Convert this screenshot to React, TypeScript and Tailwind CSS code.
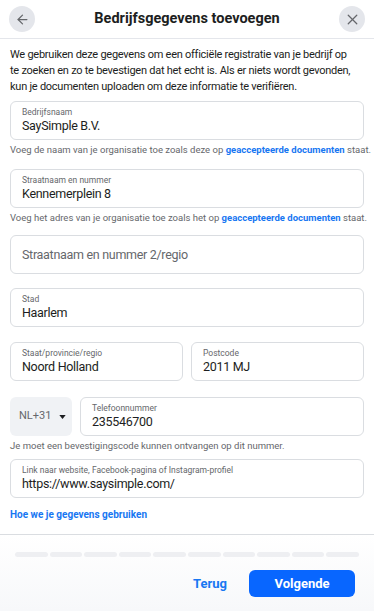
import { ArrowLeft, X } from "lucide-react";

const font = { fontFamily: 'Roboto, "Liberation Sans", Arial, sans-serif' };

function Field({ label, value, placeholder }: { label?: string; value?: string; placeholder?: string }) {
  return (
    <div className="h-[39px] rounded-[6px] border border-[#dadde1] bg-white px-[11px] flex flex-col justify-center">
      {label ? (
        <>
          <div className="text-[8.5px] leading-[11px] text-[#65676b] whitespace-nowrap">{label}</div>
          <div className="text-[12.5px] leading-[16px] tracking-[-0.3px] text-[#1c1e21]">{value}</div>
        </>
      ) : (
        <div className="text-[12.5px] leading-[16px] tracking-[-0.3px] text-[#65676b]">{placeholder}</div>
      )}
    </div>
  );
}

function Helper({ children }: { children: React.ReactNode }) {
  return <div className="h-[12px] text-[9.5px] leading-[12px] text-[#65676b] mt-[4px] whitespace-nowrap">{children}</div>;
}

export default function App() {
  return (
    <div className="w-[374px] h-[611px] bg-white flex flex-col overflow-hidden" style={font}>
      <div className="h-[39px] flex items-center justify-between px-[9px] border-b border-[#e4e6eb] shrink-0">
        <button className="w-[26px] h-[26px] rounded-full bg-[#e4e6eb] flex items-center justify-center">
          <ArrowLeft className="w-[15px] h-[15px] text-[#65676b]" strokeWidth={2} />
        </button>
        <div className="text-[14.5px] font-bold text-[#1c1e21]">Bedrijfsgegevens toevoegen</div>
        <button className="w-[26px] h-[26px] rounded-full bg-[#e4e6eb] flex items-center justify-center">
          <X className="w-[17px] h-[17px] text-[#65676b]" strokeWidth={1.75} />
        </button>
      </div>

      <div className="px-[10px] flex-1 min-h-0">
        <p className="text-[11px] leading-[16px] tracking-[-0.25px] text-[#1c1e21] mt-[8px] whitespace-nowrap">
          We gebruiken deze gegevens om een officiële registratie van je bedrijf op
          <br />
          te zoeken en zo te bevestigen dat het echt is. Als er niets wordt gevonden,
          <br />
          kun je documenten uploaden om deze informatie te verifiëren.
        </p>

        <div className="mt-[6px]">
          <Field label="Bedrijfsnaam" value="SaySimple B.V." />
          <Helper>
            Voeg de naam van je organisatie toe zoals deze op{" "}
            <span className="text-[#1877f2] font-bold">geaccepteerde documenten</span> staat.
          </Helper>
        </div>

        <div className="mt-[13px]">
          <Field label="Straatnaam en nummer" value="Kennemerplein 8" />
          <Helper>
            Voeg het adres van je organisatie toe zoals het op{" "}
            <span className="text-[#1877f2] font-bold">geaccepteerde documenten</span> staat.
          </Helper>
        </div>

        <div className="mt-[11px]">
          <Field placeholder="Straatnaam en nummer 2/regio" />
        </div>

        <div className="mt-[14px]">
          <Field label="Stad" value="Haarlem" />
        </div>

        <div className="mt-[15px] grid grid-cols-2 gap-[8px]">
          <Field label="Staat/provincie/regio" value="Noord Holland" />
          <Field label="Postcode" value="2011 MJ" />
        </div>

        <div className="mt-[16px] flex gap-[8px]">
          <div className="w-[62px] h-[39px] rounded-[6px] bg-[#f0f2f5] flex items-center pl-[9px] gap-[8px]">
            <span className="text-[11px] text-[#65676b]">NL+31</span>
            <svg width="7" height="4" viewBox="0 0 8 5"><path d="M0 0h8L4 5z" fill="#1c1e21" /></svg>
          </div>
          <div className="flex-1">
            <Field label="Telefoonnummer" value="235546700" />
          </div>
        </div>
        <Helper>Je moet een bevestigingscode kunnen ontvangen op dit nummer.</Helper>

        <div className="mt-[7px]">
          <Field label="Link naar website, Facebook-pagina of Instagram-profiel" value="https://www.saysimple.com/" />
        </div>

        <div className="mt-[9px] text-[10px] leading-[15px] font-bold text-[#1877f2]">Hoe we je gegevens gebruiken</div>
      </div>

      <div className="h-[77px] border-t border-[#dadde1] bg-gradient-to-b from-white to-[#f7f8fa] shrink-0 px-[15px]">
        <div className="mt-[17px] flex gap-[2px]">
          {Array.from({ length: 10 }).map((_, i) => (
            <div key={i} className="flex-1 h-[5px] rounded-full bg-[#eeeff2]" />
          ))}
        </div>
        <div className="mt-[13px] flex justify-end items-center gap-[22px] pr-[4px]">
          <span className="text-[13px] font-bold text-[#1877f2]">Terug</span>
          <button className="w-[106px] h-[27px] rounded-[6px] bg-[#0866ff] text-white text-[13px] font-bold">Volgende</button>
        </div>
      </div>
    </div>
  );
}
